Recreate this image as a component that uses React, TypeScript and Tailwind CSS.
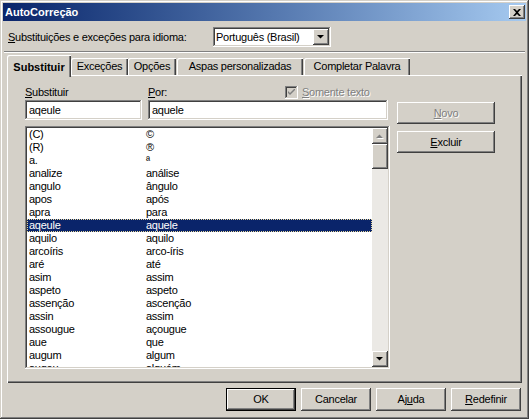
import React from "react";

const rows: [string, string][] = [
  ["(C)", "©"],
  ["(R)", "®"],
  ["a.", "ª"],
  ["analize", "análise"],
  ["angulo", "ângulo"],
  ["apos", "após"],
  ["apra", "para"],
  ["aqeule", "aquele"],
  ["aquilo", "aquilo"],
  ["arcoíris", "arco-íris"],
  ["aré", "até"],
  ["asim", "assim"],
  ["aspeto", "aspeto"],
  ["assenção", "ascenção"],
  ["assin", "assim"],
  ["assougue", "açougue"],
  ["aue", "que"],
  ["augum", "algum"],
  ["auqeu", "alguém"],
];

const raised =
  "bg-[#d4d0c8] shadow-[inset_-1px_-1px_#404040,inset_1px_1px_#ffffff,inset_-2px_-2px_#808080,inset_2px_2px_#d4d0c8]";
const sunken =
  "shadow-[inset_-1px_-1px_#ffffff,inset_1px_1px_#808080,inset_-2px_-2px_#d4d0c8,inset_2px_2px_#404040]";

function Arrow({ up, disabled }: { up?: boolean; disabled?: boolean }) {
  const pts = up ? "0,4 7,4 3.5,0.5" : "0,0 7,0 3.5,3.5";
  return (
    <svg width="8" height="5" viewBox="0 0 8 5">
      {disabled && <polygon points={pts} fill="#ffffff" transform="translate(1,1)" />}
      <polygon points={pts} fill={disabled ? "#808080" : "#000000"} />
    </svg>
  );
}

function Button({ children, def, className = "" }: { children: React.ReactNode; def?: boolean; className?: string }) {
  return (
    <div
      className={
        "flex items-center justify-center bg-[#d4d0c8] " +
        (def
          ? "shadow-[inset_-1px_-1px_#000000,inset_1px_1px_#000000,inset_-2px_-2px_#404040,inset_2px_2px_#ffffff,inset_-3px_-3px_#808080,inset_3px_3px_#d4d0c8] "
          : raised + " ") +
        className
      }
    >
      {children}
    </div>
  );
}

export default function App() {
  return (
    <div className="w-[529px] h-[419px] bg-[#d4d0c8] p-[3px] text-[11px] tracking-[-0.25px] text-black font-['Liberation_Sans',Arial,sans-serif] shadow-[inset_-1px_-1px_#404040,inset_1px_1px_#d4d0c8,inset_-2px_-2px_#808080,inset_2px_2px_#ffffff] select-none">
      {/* Title bar */}
      <div className="h-[18px] flex items-center justify-between bg-gradient-to-r from-[#0a246a] to-[#a6caf0] pl-[2px] pr-[1px]">
        <span className="text-white font-bold tracking-normal">AutoCorreção</span>
        <div className={"w-[16px] h-[14px] flex items-center justify-center " + raised}>
          <svg width="8" height="7" viewBox="0 0 8 7">
            <path d="M0 0h2l2 2 2-2h2L5 3.5 8 7H6L4 5 2 7H0l3-3.5z" fill="#000" />
          </svg>
        </div>
      </div>

      {/* Language row */}
      <div className="mt-[6px] h-[20px] flex items-center">
        <span className="pl-[5px] w-[210px]">
          <u>S</u>ubstituições e exceções para idioma:
        </span>
        <div className={"w-[118px] h-[20px] bg-white flex items-center p-[2px] " + sunken}>
          <span className="flex-1 pl-[1px]">Português (Brasil)</span>
          <div className={"w-[16px] h-[16px] flex items-center justify-center " + raised}>
            <Arrow />
          </div>
        </div>
      </div>

      {/* Separator */}
      <div className="mt-[4px] mx-[1px] h-[2px] border-t border-t-[#808080] border-b border-b-white" />

      {/* Tabs */}
      <div className="mt-[2px] ml-[4px] h-[22px] flex items-end relative z-10">
        <div className="w-[64px] h-[22px] flex items-start justify-center pt-[4px] bg-[#d4d0c8] font-bold tracking-normal rounded-tl-[2px] shadow-[inset_1px_1px_#ffffff,inset_-1px_0_#404040,inset_-2px_0_#808080]">
          Substituir
        </div>
        {[
          ["Exceções", "w-[57px]", ""],
          ["Opções", "w-[48px]", ""],
          ["Aspas personalizadas", "w-[126px]", "ml-[1px]"],
          ["Completar Palavra", "w-[106px]", "ml-[1px]"],
        ].map(([t, w, m]) => (
          <div
            key={t}
            className={
              w +
              " " +
              m +
              " h-[17px] mb-[2px] flex items-center justify-center rounded-tl-[2px] shadow-[inset_1px_1px_#ffffff,inset_-1px_0_#404040,inset_-2px_0_#808080]"
            }
          >
            {t}
          </div>
        ))}
      </div>

      {/* Tab panel */}
      <div className="-mt-[2px] ml-[4px] w-[515px] h-[308px] pl-[18px] pt-[10px] flex gap-[7px] shadow-[inset_1px_1px_#ffffff,inset_-1px_-1px_#404040,inset_-2px_-2px_#808080]">
        <div className="w-[365px] flex flex-col">
          <div className="flex gap-[6px]">
            <div className="w-[117px] flex flex-col">
              <div className="h-[15px] flex items-center">
                <span>
                  <u>S</u>ubstituir
                </span>
              </div>
              <div className={"h-[20px] bg-white flex items-center pl-[4px] " + sunken}>aqeule</div>
            </div>
            <div className="w-[240px] flex flex-col">
              <div className="h-[15px] flex items-center">
                <span className="w-[137px]">
                  <u>P</u>or:
                </span>
                <div className="w-[13px] h-[13px] flex items-center justify-center bg-[#d4d0c8] shadow-[inset_-1px_-1px_#ffffff,inset_1px_1px_#808080,inset_-2px_-2px_#d4d0c8,inset_2px_2px_#404040]">
                  <svg width="7" height="7" viewBox="0 0 7 7">
                    <path d="M0 2l2 2 5-5v2L2 6 0 4z" fill="#808080" />
                  </svg>
                </div>
                <span className="ml-[4px] text-[#808080] [text-shadow:1px_1px_0_#ffffff]">
                  <u>S</u>omente texto
                </span>
              </div>
              <div className={"h-[20px] bg-white flex items-center pl-[4px] " + sunken}>aquele</div>
            </div>
          </div>

          {/* List */}
          <div className={"mt-[6px] h-[243px] bg-white p-[2px] flex " + sunken}>
            <div className="flex-1 overflow-hidden">
              {rows.map(([a, b]) => {
                const sel = a === "aqeule";
                return (
                  <div
                    key={a}
                    className={
                      "h-[13px] leading-[11px] flex items-center " +
                      (sel
                        ? "bg-[#0a246a] text-white border border-dotted border-[#e8d89a] pl-[1px]"
                        : "pl-[2px]")
                    }
                  >
                    <span className="w-[117px]">{a}</span>
                    <span>{b}</span>
                  </div>
                );
              })}
            </div>
            <div className="w-[16px] flex flex-col bg-[#ebe9e5]">
              <div className={"h-[16px] flex items-center justify-center " + raised}>
                <Arrow up disabled />
              </div>
              <div className={"h-[25px] " + raised} />
              <div className="flex-1" />
              <div className={"h-[16px] flex items-center justify-center " + raised}>
                <Arrow />
              </div>
            </div>
          </div>
        </div>

        <div className="w-[98px] pt-[17px] flex flex-col gap-[7px]">
          <Button className="h-[22px] text-[#808080] [text-shadow:1px_1px_0_#ffffff]">
            <span>
              <u>N</u>ovo
            </span>
          </Button>
          <Button className="h-[22px]">
            <span>
              <u>E</u>xcluir
            </span>
          </Button>
        </div>
      </div>

      {/* Bottom buttons */}
      <div className="mt-[5px] pr-[5px] flex justify-end gap-[5px]">
        <Button def className="w-[70px] h-[23px]">
          OK
        </Button>
        <Button className="w-[70px] h-[23px]">Cancelar</Button>
        <Button className="w-[70px] h-[23px]">
          <span>
            Aj<u>u</u>da
          </span>
        </Button>
        <Button className="w-[70px] h-[23px]">
          <span>
            <u>R</u>edefinir
          </span>
        </Button>
      </div>
    </div>
  );
}
